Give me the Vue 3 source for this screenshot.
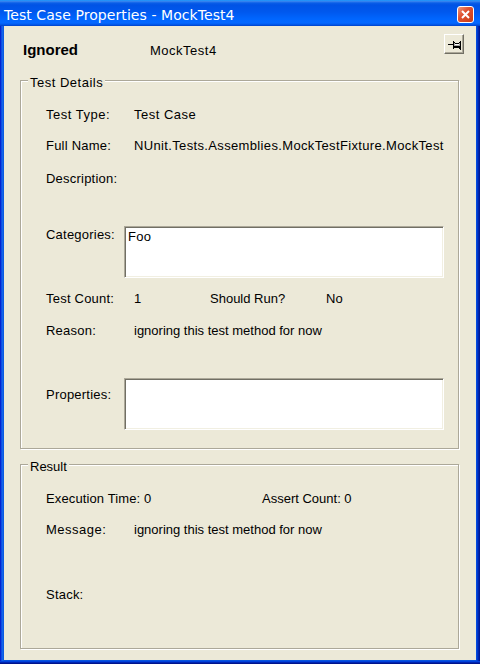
<script setup>
const test = {
  name: 'MockTest4',
  status: 'Ignored',
  type: 'Test Case',
  fullName: 'NUnit.Tests.Assemblies.MockTestFixture.MockTest',
  category: 'Foo',
  count: 1,
  shouldRun: 'No',
  reason: 'ignoring this test method for now',
  time: 0,
  asserts: 0,
}
</script>

<template>
  <div class="window">
    <header class="titlebar">
      <span class="title">Test Case Properties - {{ test.name }}</span>
      <button class="close" aria-label="Close">
        <svg width="9" height="9" viewBox="0 0 9 9"><path d="M1 1l7 7M8 1l-7 7" stroke="#fff" stroke-width="2" /></svg>
      </button>
    </header>
    <main class="client">
      <div class="heading">
        <strong class="status">{{ test.status }}</strong>
        <span class="name wide">{{ test.name }}</span>
        <button class="pin" aria-label="Pin">
          <svg width="13" height="10" viewBox="0 0 13 10" shape-rendering="crispEdges">
            <path d="M6 3h6v4H6z" fill="#a8a8a4" />
            <path d="M7 4h4v1H7z" fill="#fff" />
            <path d="M0 4h5v1H0zM5 1h1v8H5zM6 2h1v1H6zM7 3h4v1H7zM11 2h1v1h-1zM12 1h1v9h-1zM6 6h6v1H6zM6 7h2v1H6zM7 7h4v1H7zM11 7h1v2h-1z" fill="#000" />
          </svg>
        </button>
      </div>

      <section class="group details">
        <h2 class="legend wide">Test Details</h2>
        <div class="row type"><span class="label wide">Test Type:</span><span class="wide">{{ test.type }}</span></div>
        <div class="row full"><span class="label">Full Name:</span><span class="value">{{ test.fullName }}</span></div>
        <div class="row description"><span class="label">Description:</span></div>
        <div class="row categories"><span class="label">Categories:</span><div class="list">{{ test.category }}</div></div>
        <div class="row count">
          <span class="label">Test Count:</span><span class="number">{{ test.count }}</span>
          <span class="should">Should Run?</span><span>{{ test.shouldRun }}</span>
        </div>
        <div class="row reason"><span class="label">Reason:</span><span>{{ test.reason }}</span></div>
        <div class="row properties"><span class="label">Properties:</span><div class="list"></div></div>
      </section>

      <section class="group result">
        <h2 class="legend">Result</h2>
        <div class="row execution">
          <span class="time">Execution Time: {{ test.time }}</span><span>Assert Count: {{ test.asserts }}</span>
        </div>
        <div class="row message"><span class="label wide">Message:</span><span>{{ test.reason }}</span></div>
        <div class="row"><span class="label">Stack:</span></div>
      </section>
    </main>
  </div>
</template>

<style>
body { margin: 0; background: #ece9d8; }
</style>

<style scoped>
.window {
  box-sizing: border-box;
  width: 480px;
  height: 664px;
  display: flex;
  flex-direction: column;
  background: linear-gradient(to right, #0019c8 0, #0831d9 1px, #166aee 2px, #0855dd 4px, #0855dd 476px, #0040dc 477px, #001ea0 479px, #00138c 480px);
  box-shadow: inset 0 -1px #00138c, inset 0 -2px #0025b0, inset 0 -3px #0040dc;
  font: 13px/15px "Liberation Sans", Arial, sans-serif;
  color: #000;
  overflow: hidden;
}
.titlebar {
  box-sizing: border-box;
  height: 26px;
  flex: none;
  display: flex;
  justify-content: space-between;
  padding: 6px 6px 0 4px;
  background: linear-gradient(to bottom, #0997ff 0, #3f8cf0 1px, #0a5ee8 3px, #0053e5 5px, #0058ee 12px, #0066ff 19px, #0468ff 23px, #0052e2 25px, #003fc4 26px);
}
.title {
  font: 14px/18px "DejaVu Sans", sans-serif;
  letter-spacing: 0.07px;
  color: #fff;
  white-space: nowrap;
}
.close {
  box-sizing: border-box;
  width: 17px;
  height: 17px;
  padding: 0;
  border: 1px solid #fff;
  border-radius: 3px;
  background: linear-gradient(135deg, #ee9a7e, #df5130 40%, #c93c15);
  display: flex;
  align-items: center;
  justify-content: center;
}
.client {
  box-sizing: border-box;
  width: 472px;
  height: 634px;
  margin: 0 4px 4px;
  padding: 8px 16px 0;
  background: #ece9d8;
}
.heading {
  height: 46px;
  display: flex;
  align-items: flex-start;
  margin-right: -4px;
}
.status {
  width: 127px;
  height: 16px;
  margin: 8px 0 0 3px;
  font-size: 15px;
  line-height: 16px;
  overflow: hidden;
}
.name { margin-top: 9px; }
.wide { letter-spacing: 0.5px; }
.pin {
  box-sizing: border-box;
  width: 20px;
  height: 20px;
  margin-left: auto;
  padding: 5px 0 0 3px;
  border: 1px solid;
  border-color: #fff #716f64 #716f64 #fff;
  box-shadow: inset -1px -1px #aca899;
  background: #ece9d8;
  display: flex;
  align-items: flex-start;
}
.group {
  box-sizing: border-box;
  width: 439px;
  border: 1px solid #aca899;
  box-shadow: 1px 1px #fff, inset 1px 1px #fff;
  padding: 0 14px 0 25px;
}
.details { height: 369px; }
.result { height: 185px; margin-top: 15px; }
.legend {
  width: fit-content;
  height: 15px;
  margin: -6px 0 17px -18px;
  padding: 0 2px;
  font: inherit;
  background: #ece9d8;
}
.row { display: flex; align-items: flex-start; white-space: nowrap; }
.label { width: 88px; flex: none; }
.label:not(.wide) { letter-spacing: 0.22px; }
.type { height: 31px; }
.full { height: 33px; }
.value { letter-spacing: 0.35px; }
.description { height: 55px; }
.categories { height: 65px; }
.categories .label { width: 78px; margin-top: 1px; }
.list {
  box-sizing: border-box;
  width: 320px;
  height: 52px;
  flex: none;
  padding: 2px 3px;
  border: 1px solid;
  border-color: #aca899 #fff #fff #aca899;
  box-shadow: inset 1px 1px #716f64, inset -1px -1px #f1efe2;
  background: #fff;
  letter-spacing: 0.3px;
}
.count { height: 32px; }
.number { width: 76px; }
.should { width: 116px; }
.reason { height: 55px; }
.properties .label { width: 78px; margin-top: 9px; }
.execution { height: 31px; }
.time { width: 216px; letter-spacing: 0.12px; }
.message { height: 65px; }
</style>
